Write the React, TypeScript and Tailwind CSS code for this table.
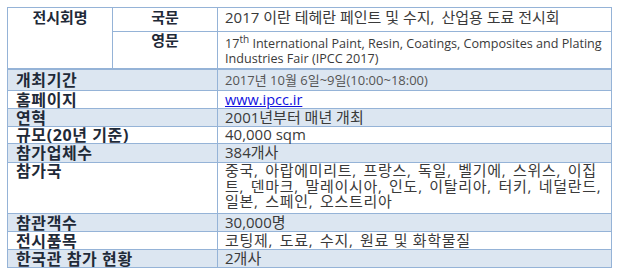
import React from "react";

const font = { fontFamily: '"Open Sans", "Noto Sans CJK KR", sans-serif' };

function withCommas(s: string): React.ReactNode {
  const parts = s.split(",");
  return parts.map((p, i) => (
    <React.Fragment key={i}>
      {p}
      {i < parts.length - 1 ? <span className="mr-[2px]">,</span> : null}
    </React.Fragment>
  ));
}

type Row = { label: string; value: React.ReactNode; h: string; blue: boolean; last?: boolean; top?: boolean };

export default function App() {
  const countries = [
    "중국, 아랍에미리트, 프랑스, 독일, 벨기에, 스위스, 이집",
    "트, 덴마크, 말레이시아, 인도, 이탈리아, 터키, 네덜란드,",
    "일본, 스페인, 오스트리아",
  ];
  const rows: Row[] = [
    { label: "개최기간", value: <span className="text-[13px] leading-[15px] text-[#555]">2017년 10월 6일~9일(10:00~18:00)</span>, h: "h-[21px]", blue: true },
    { label: "홈페이지", value: <a className="text-[14.5px] leading-[15px] text-[#1010e0] underline">www.ipcc.ir</a>, h: "h-[18px]", blue: false },
    { label: "연혁", value: "2001년부터 매년 개최", h: "h-[18px]", blue: true },
    { label: "규모(20년 기준)", value: "40,000 sqm", h: "h-[17px]", blue: false },
    { label: "참가업체수", value: "384개사", h: "h-[19px]", blue: true },
    {
      label: "참가국",
      value: (
        <>
          {countries.map((l, i) => (
            <span key={i} className="block whitespace-nowrap tracking-[0.7px]">
              {withCommas(l)}
            </span>
          ))}
        </>
      ),
      h: "h-[51px]",
      blue: false,
      top: true,
    },
    { label: "참관객수", value: "30,000명", h: "h-[18px]", blue: true },
    { label: "전시품목", value: <span className="tracking-[0.7px]">{withCommas("코팅제, 도료, 수지, 원료 및 화학물질")}</span>, h: "h-[18px]", blue: false },
    { label: "한국관 참가 현황", value: "2개사", h: "h-[17px]", blue: true, last: true },
  ];

  return (
    <div className="w-[618px] h-[275px] bg-white pt-[7px] pl-[7px]" style={font}>
      <div className="w-[605px] border border-[#95b3d7] text-[#3a3a3a]">
        {/* header block */}
        <div className="flex border-b-2 border-[#95b3d7]">
          <div className="w-[105px] shrink-0 border-r border-[#95b3d7] text-center text-[15px] font-bold leading-[16px] text-[#1f2a38] pt-[1px]">
            전시회명
          </div>
          <div className="flex flex-col flex-1">
            <div className="flex h-[24px] border-b border-[#95b3d7]">
              <div className="w-[105px] shrink-0 border-r border-[#95b3d7] text-center text-[15px] font-bold leading-[16px] text-[#1f2a38] pt-[1px]">
                국문
              </div>
              <div className="flex-1 pl-[7px] pt-[1px] text-[15px] leading-[16px] text-[#3a3a3a]">
                2017 이란 테헤란 페인트 및 수지<span className="mr-[3px]">,</span> 산업용 도료 전시회
              </div>
            </div>
            <div className="flex h-[36px]">
              <div className="w-[105px] shrink-0 border-r border-[#95b3d7] text-center text-[15px] font-bold leading-[16px] text-[#1f2a38]">
                영문
              </div>
              <div className="flex-1 pl-[7px] pr-[4px] pt-[4px] text-[12.6px] leading-[15px] text-[#3a3a3a]">
                17<sup className="text-[10px]">th</sup> International Paint, Resin, Coatings, Composites and Plating Industries Fair (IPCC 2017)
              </div>
            </div>
          </div>
        </div>
        {rows.map((r, i) => (
          <div
            key={i}
            className={`flex ${r.h} ${r.last ? "" : "border-b"} border-[#95b3d7] ${r.blue ? "bg-[#dce6f1]" : "bg-white"}`}
          >
            <div className={`w-[210px] shrink-0 border-r border-[#95b3d7] pl-[8px] flex ${r.top ? "items-start" : "items-center"} text-[16px] tracking-[0.6px] font-bold leading-[16px] text-[#1f2a38]`}>
              {r.label}
            </div>
            <div className={`flex-1 pl-[7px] pr-[5px] flex ${r.top ? "items-start" : "items-center"} text-[15px] leading-[15.5px] text-[#3a3a3a]`}>
              <span>{r.value}</span>
            </div>
          </div>
        ))}
      </div>
    </div>
  );
}
